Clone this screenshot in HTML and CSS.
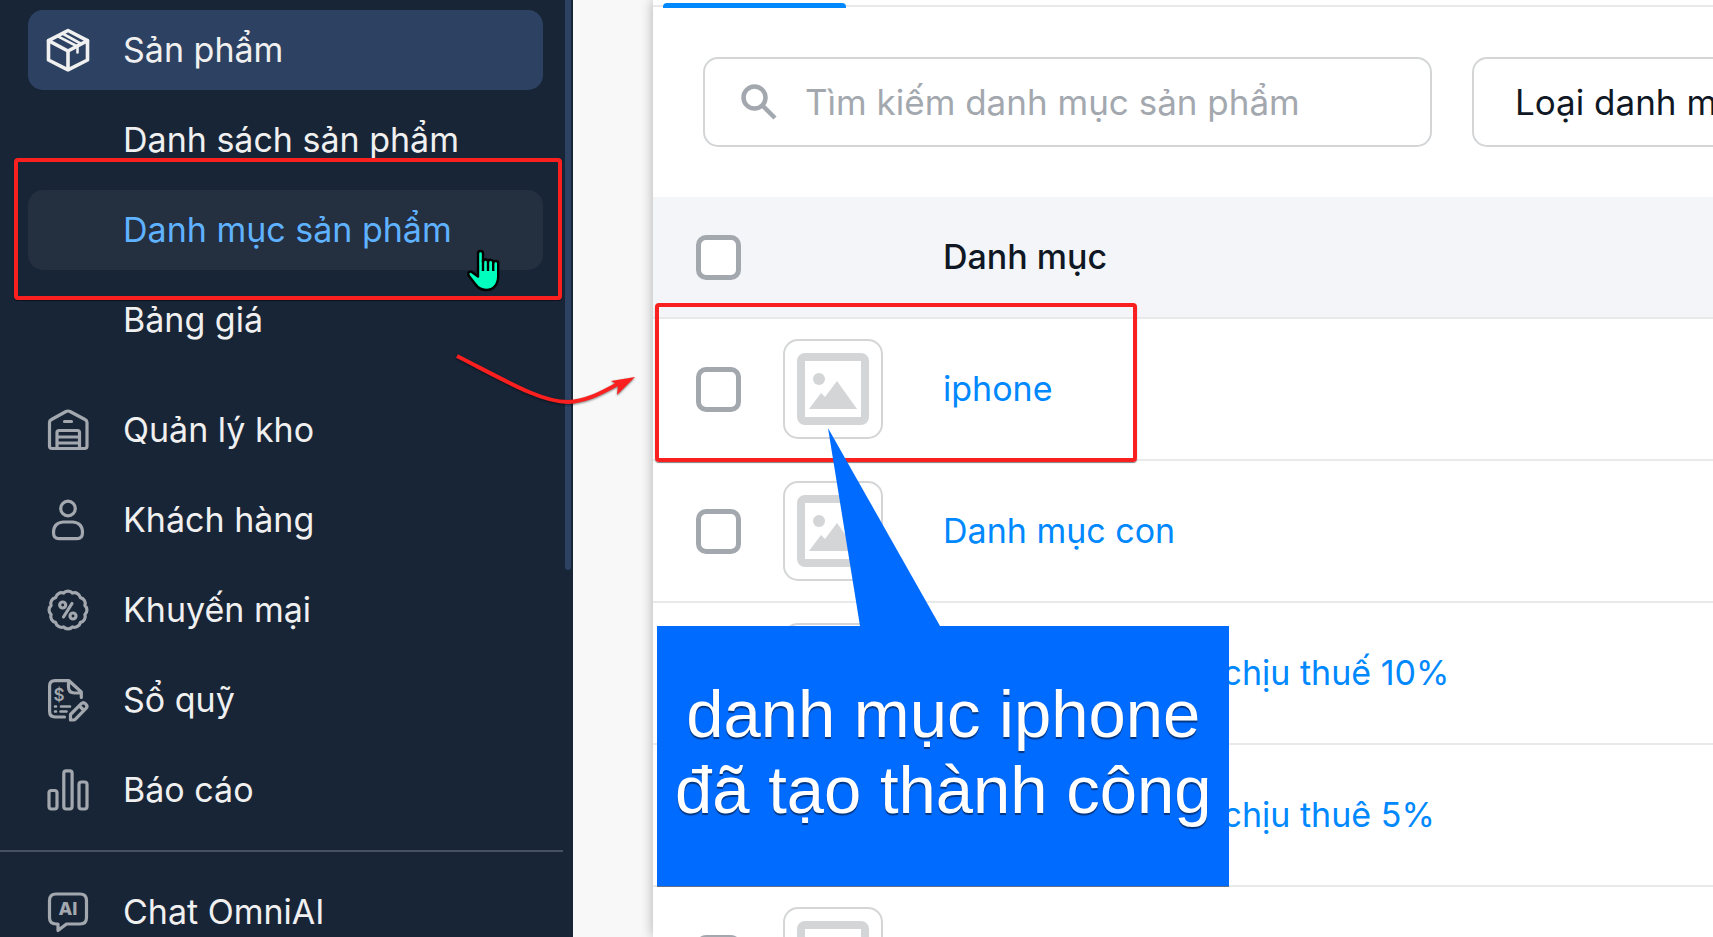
FILE: index.html
```html
<!DOCTYPE html>
<html lang="vi">
<head>
<meta charset="utf-8">
<title>Danh mục sản phẩm</title>
<link rel="stylesheet" href="styles.css">
</head>
<body>
<div class="app">
  <aside class="sidebar">
    <nav>
      <ul class="menu">
        <li><a class="item item-active" href="#">
          <svg class="icon" viewBox="0 0 48 48"><path d="M24 4.500 43.500 14.700V34L24 43.800 4.500 34V14.700Z"/><path d="M4.500 14.700 24 25l19.500-10.300M24 25v18.500"/><path class="icon-thin" d="M18.500 7.500 36.500 17.500M13.500 10.200 33.500 20.500V26.500"/></svg>
          Sản phẩm</a></li>
        <li><a class="item item-sub" href="#">Danh sách sản phẩm</a></li>
        <li class="marked"><a class="item item-sub item-current" href="#">Danh mục sản phẩm</a>
          <span class="mark mark-menu"></span>
          <svg class="cursor" viewBox="0 0 36 46"><path d="M12 5.500a2.500 2.500 0 0 1 5 0V14a2.400 2.400 0 0 1 5 0 2.400 2.400 0 0 1 5.200 1 2.300 2.300 0 0 1 5 1V28c0 9-5 14-12 14-6 0-9-3-11-6L3 28c-2-3.500 1-5.500 3.500-3.500L12 28.500Z"/><path class="cursor-gap" d="M17 12v11M22 14v9M27.200 15v8"/></svg>
        </li>
        <li><a class="item item-sub" href="#">Bảng giá</a></li>
      </ul>
      <ul class="menu menu-main">
        <li><a class="item" href="#">
          <svg class="icon" viewBox="0 0 48 48"><path d="M5.500 16.500q0-2 2-3L22 5.500q2-1 4 0L41 13.500q2 1 2 3V40q0 2.500-2.500 2.500H8Q5.500 42.500 5.500 40Z"/><path d="M20.500 15.500h7M13 42V26.500q0-2 2-2h18.500q2 0 2 2V42M13 31h22M13 37h22"/></svg>
          Quản lý kho</a></li>
        <li><a class="item" href="#">
          <svg class="icon" viewBox="0 0 48 48"><circle cx="24" cy="12.500" r="7.300"/><path d="M19 26h10q9.500 1 9.500 10.500 0 6.200-5.500 6.200H15q-5.500 0-5.500-6.200Q9.500 27 19 26Z"/></svg>
          Khách hàng</a></li>
        <li><a class="item" href="#">
          <svg class="icon" viewBox="0 0 48 48"><path d="M40.900 28.500A6 6 0 0 1 36.400 36.400 6 6 0 0 1 28.500 40.900 6 6 0 0 1 19.500 40.900 6 6 0 0 1 11.600 36.400 6 6 0 0 1 7.100 28.500 6 6 0 0 1 7.100 19.500 6 6 0 0 1 11.600 11.600 6 6 0 0 1 19.500 7.100 6 6 0 0 1 28.500 7.100 6 6 0 0 1 36.400 11.600 6 6 0 0 1 40.900 19.500 6 6 0 0 1 40.900 28.500Z"/><circle cx="18.700" cy="19" r="3"/><circle cx="29" cy="30" r="3"/><path d="M28 17.500 19.500 31"/></svg>
          Khuyến mại</a></li>
        <li><a class="item" href="#">
          <svg class="icon" viewBox="0 0 48 48"><path d="M20.500 41H11q-5.400 0-5.400-5.400V10Q5.600 4.700 11 4.700H25L37.300 16V21.500M24.500 5.500V11q0 6 6 6h6"/><path d="M26.500 44v-5.500L37.300 27.700q2-2 4 0l.7.700q2 2 0 4L31.500 43.200q-.8.800-2 .8ZM35.500 30l4 4"/><path class="icon-thin" d="M11 30.500h1M17 30.500h9M11 35.500h1M16.500 35.500h6"/><text class="icon-text icon-dollar" x="15" y="24.500">$</text></svg>
          Sổ quỹ</a></li>
        <li><a class="item" href="#">
          <svg class="icon" viewBox="0 0 48 48"><rect x="5" y="24.500" width="8" height="18.500" rx="2.500"/><rect x="19.800" y="4.800" width="8.300" height="38.200" rx="2.500"/><rect x="35" y="16" width="8" height="27" rx="2.500"/></svg>
          Báo cáo</a></li>
      </ul>
      <ul class="menu menu-extra">
        <li><a class="item" href="#">
          <svg class="icon" viewBox="0 0 48 48"><path d="M12 6H36q6.500 0 6.500 6.500V29.500q0 6.500-6.500 6.500H22.500L14 42.500V36H12q-6.500 0-6.500-6.500V12.500Q5.500 6 12 6Z"/><text class="icon-text" x="24" y="27">AI</text></svg>
          Chat OmniAI</a></li>
      </ul>
    </nav>
    <span class="scrollbar"></span>
  </aside>

  <main class="panel">
    <div class="tabs"><span class="tab-line"></span></div>
    <form class="toolbar">
      <label class="search">
        <svg class="search-icon" viewBox="0 0 36 36"><circle cx="13.500" cy="13.500" r="11"/><path d="m21.500 21.500 12.500 12.500"/></svg>
        <input type="search" placeholder="Tìm kiếm danh mục sản phẩm" aria-label="Tìm kiếm danh mục sản phẩm">
      </label>
      <select class="filter" aria-label="Loại danh mục"><option>Loại danh mục</option></select>
    </form>
    <table class="grid">
      <thead>
        <tr><th class="cell-check"><input type="checkbox" class="check" aria-label="Chọn tất cả"></th><th class="cell-thumb"></th><th class="cell-name">Danh mục</th></tr>
      </thead>
      <tbody>
        <tr>
          <td class="cell-check marked"><input type="checkbox" class="check" aria-label="Chọn iphone"><span class="mark mark-row"></span></td>
          <td class="cell-thumb"><span class="thumb"><svg viewBox="0 0 72 72"><use href="#photo"/></svg></span></td>
          <td class="cell-name"><a href="#">iphone</a></td>
        </tr>
        <tr>
          <td class="cell-check"><input type="checkbox" class="check" aria-label="Chọn Danh mục con"></td>
          <td class="cell-thumb"><span class="thumb"><svg viewBox="0 0 72 72"><use href="#photo"/></svg></span></td>
          <td class="cell-name"><a href="#">Danh mục con</a></td>
        </tr>
        <tr>
          <td class="cell-check"><input type="checkbox" class="check" aria-label="Chọn chịu thuế 10%"></td>
          <td class="cell-thumb"><span class="thumb"><svg viewBox="0 0 72 72"><use href="#photo"/></svg></span></td>
          <td class="cell-name"><a href="#">Sản phẩm không chịu thuế 10%</a></td>
        </tr>
        <tr>
          <td class="cell-check"><input type="checkbox" class="check" aria-label="Chọn chịu thuê 5%"></td>
          <td class="cell-thumb"><span class="thumb"><svg viewBox="0 0 72 72"><use href="#photo"/></svg></span></td>
          <td class="cell-name"><a href="#">Sản phẩm không chịu thuê 5%</a></td>
        </tr>
        <tr>
          <td class="cell-check"><input type="checkbox" class="check" aria-label="Chọn danh mục"></td>
          <td class="cell-thumb"><span class="thumb"><svg viewBox="0 0 72 72"><use href="#photo"/></svg></span></td>
          <td class="cell-name"></td>
        </tr>
      </tbody>
    </table>
    <div class="callout">
      <svg class="callout-tail" viewBox="0 0 112 198"><path d="M0 0 32 198H112Z"/></svg>
      <p>danh mục iphone<br>đã tạo thành công</p>
    </div>
  </main>

  <svg class="arrow" viewBox="0 0 180 52"><path class="arrow-line" d="M1 3C50 28 85 49 112 49 133 48 148 38 162 31"/><path class="arrow-head" d="M179 24 155 28l7 4-1 10Z"/></svg>
</div>

<svg class="defs" aria-hidden="true">
  <symbol id="photo" viewBox="0 0 72 72"><path fill-rule="evenodd" d="M8 0H64a8 8 0 0 1 8 8V64a8 8 0 0 1-8 8H8a8 8 0 0 1-8-8V8A8 8 0 0 1 8 0ZM8 8V64H64V8Z"/><circle cx="22" cy="26" r="6"/><path d="M12 56 24 40l4 4L40 28 60 56Z"/></symbol>
</svg>
</body>
</html>
```
FILE: styles.css
```css
* { box-sizing: border-box; }

body {
  margin: 0;
  background: #f8f8f8;
  color: #0f1824;
  font-family: Inter, "Noto Sans", sans-serif;
  font-size: 34px;
  line-height: 44px;
}

ul { list-style: none; margin: 0; padding: 0; }

a { color: #0088ff; text-decoration: none; }

.app {
  position: relative;
  display: flex;
  gap: 80px;
  height: 100vh;
  overflow: hidden;
}

/* Sidebar */
.sidebar {
  position: relative;
  flex: 0 0 573px;
  padding-top: 10px;
  background: #182537;
}

.menu {
  display: flex;
  flex-direction: column;
  gap: 10px;
  padding: 0 30px 0 28px;
}

.menu-main { margin-top: 30px; }

.menu-extra {
  margin: 20px 10px 0 0;
  padding: 20px 20px 0 28px;
  border-top: 2px solid #465260;
}

.item {
  display: flex;
  align-items: center;
  gap: 31px;
  height: 80px;
  padding-left: 16px;
  border-radius: 15px;
  color: #f0f0f0;
}

.item-active { background: #2d4262; }
.item-sub { padding-left: 95px; }
.item-current { background: #242f40; color: #5fb2ff; }

.icon {
  width: 48px;
  height: 48px;
  fill: none;
  stroke: #a3a8af;
  stroke-width: 3.2;
  stroke-linecap: round;
  stroke-linejoin: round;
}

.item-active .icon { stroke: #f0f0f0; stroke-width: 3.6; }
.icon-thin { stroke-width: 2.6; }

.icon-text {
  fill: #a3a8af;
  stroke: none;
  font-size: 18px;
  font-weight: 800;
  text-anchor: middle;
}

.icon-dollar { font-size: 17px; font-weight: 600; }

.scrollbar {
  position: absolute;
  top: -8px;
  right: 2px;
  width: 6px;
  height: 578px;
  border-radius: 3px;
  background: #2d4262;
}

/* Main panel */
.panel {
  position: relative;
  flex: 1;
  min-width: 0;
  background: #fff;
  box-shadow: 0 0 12px rgba(0, 0, 0, 0.3);
}

.tabs {
  display: flex;
  align-items: flex-end;
  height: 8px;
  padding-left: 10px;
  background: linear-gradient(#e8e9ea, #e8e9ea) 0 5px / 100% 2px no-repeat;
}

.tab-line {
  width: 183px;
  height: 5px;
  border-radius: 4px 4px 0 0;
  background: #0088ff;
}

.toolbar {
  display: flex;
  gap: 40px;
  padding: 49px 0 50px 50px;
  overflow: hidden;
  font-size: 35px;
}

.search,
.filter {
  height: 90px;
  border: 2px solid #d3d5d7;
  border-radius: 15px;
  background: #fff;
}

.search {
  display: flex;
  flex: 1;
  align-items: center;
  gap: 28px;
  padding: 0 36px;
}

.search-icon {
  flex: none;
  width: 36px;
  height: 36px;
  fill: none;
  stroke: #a3a8af;
  stroke-width: 4.5;
}

.search input {
  flex: 1;
  min-width: 0;
  padding: 0;
  border: 0;
  outline: 0;
  background: none;
  color: inherit;
  font: inherit;
}

.search input::placeholder { color: #a3a8af; opacity: 1; }

.filter {
  flex: none;
  width: 361px;
  margin-right: -120px;
  padding: 0 41px;
  appearance: none;
  color: #0f1824;
  font: inherit;
}

.grid {
  width: 100%;
  border-collapse: separate;
  border-spacing: 0;
  table-layout: fixed;
}

.grid th,
.grid td {
  height: 142px;
  padding: 0;
  border-bottom: 2px solid #e8e9ea;
  text-align: left;
  vertical-align: middle;
}

.grid th {
  height: 122px;
  background: #f4f5f8;
  font-weight: 500;
}

.grid .cell-check { width: 130px; padding-left: 43px; }
.grid .cell-thumb { width: 160px; }

.check {
  display: block;
  width: 45px;
  height: 45px;
  margin: 0;
  appearance: none;
  border: 5px solid #a3a8af;
  border-radius: 10px;
  background: #fff;
}

.thumb {
  display: flex;
  width: 100px;
  height: 100px;
  padding: 12px;
  border: 2px solid #d3d5d7;
  border-radius: 15px;
}

.thumb svg { width: 72px; height: 72px; fill: #d3d5d7; }

/* Annotations */
.marked { position: relative; }

.mark {
  position: absolute;
  z-index: 1;
  border: 4px solid #fa2020;
  border-radius: 4px;
  box-shadow: 0 1px 1px rgba(0, 0, 0, 0.5);
  pointer-events: none;
}

.mark-menu { inset: -32px -19px -30px -14px; }

.mark-row {
  top: -16px;
  left: 2px;
  width: 482px;
  height: 159px;
}

.cursor {
  position: absolute;
  z-index: 2;
  right: 41px;
  bottom: -24px;
  width: 36px;
  height: 46px;
  fill: #00ffbf;
  stroke: #000;
  stroke-width: 2.4;
  stroke-linejoin: round;
}

.arrow {
  position: absolute;
  z-index: 2;
  top: 353px;
  left: 456px;
  width: 180px;
  height: 52px;
  overflow: visible;
  filter: drop-shadow(0 1px 1px rgba(0, 0, 0, 0.5));
}

.arrow-line { fill: none; stroke: #fa2020; stroke-width: 4; }
.arrow-head { fill: #fa2020; }

.callout {
  position: absolute;
  z-index: 3;
  top: 626px;
  left: 4px;
  padding: 50px 18px 58px;
  background: #006bff;
  box-shadow: 0 1px 0 #60708a;
  color: #fff;
  font-family: "Liberation Sans", Arial, sans-serif;
  font-size: 67px;
  line-height: 76px;
  text-align: center;
  text-shadow: 0 2px 1px rgba(0, 0, 0, 0.5);
  white-space: nowrap;
}

.callout p { margin: 0; }

.callout-tail {
  position: absolute;
  top: -198px;
  left: 171px;
  width: 112px;
  height: 198px;
  fill: #006bff;
}

.defs { position: absolute; width: 0; height: 0; }
```
